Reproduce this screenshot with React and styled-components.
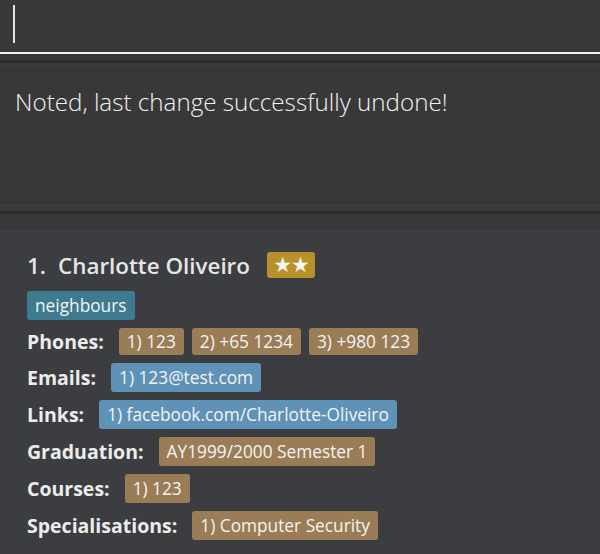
import React from "react";
import styled, { createGlobalStyle } from "styled-components";

const Global = createGlobalStyle`
  html, body { margin: 0; padding: 0; background: #383838; }
  body { width: 600px; height: 554px; overflow: hidden; font-family: "Open Sans", "Noto Sans", sans-serif; }
`;

const Page = styled.div`
  display: flex;
  flex-direction: column;
  width: 600px;
  height: 554px;
  background: #383838;
`;

const CommandBox = styled.div`
  height: 54px;
  border-bottom: 2px solid #f2f2f2;
  display: flex;
  align-items: flex-start;
  padding: 5px 0 0 13px;
  box-sizing: border-box;
  flex-shrink: 0;
`;

const Caret = styled.div`
  width: 2px;
  height: 38px;
  background: #e6e6e6;
`;

const Divider = styled.div`
  flex-shrink: 0;
  height: ${(p) => p.$h || 2}px;
  background: ${(p) => p.$c || "#2a2a2a"};
  margin-top: ${(p) => p.$mt || 0}px;
`;

const ResultBox = styled.div`
  flex-shrink: 0;
  height: 133px;
  padding: 14px 15px 0;
  box-sizing: border-box;
  color: #f2f2f2;
  font-family: "Open Sans", sans-serif;
  font-weight: 300;
  font-size: 24.2px;
  border-top: 1px solid #2f2f2f;
  border-bottom: 1px solid #2f2f2f;
  margin-top: 7px;
`;

const Card = styled.div`
  flex: 1;
  background: #3c3d40;
  margin-top: 16px;
  padding: 21px 0 0 27px;
  display: flex;
  flex-direction: column;
  gap: 8px;
`;

const NameRow = styled.div`
  display: flex;
  align-items: center;
  height: 28px;
  color: #e6e6e6;
  font-family: "Open Sans", sans-serif;
  font-weight: 600;
  font-size: 22.4px;
  margin-bottom: 4px;
`;

const Index = styled.span`
  width: 31px;
`;

const Stars = styled.span`
  margin-left: 17px;
  width: 48px;
  height: 26px;
  border-radius: 3px;
  background: #b8912a;
  color: #f4f4f4;
  font-size: 21px;
  display: flex;
  align-items: center;
  justify-content: center;
  letter-spacing: -1px;
  font-family: "DejaVu Sans", sans-serif;
`;

const Row = styled.div`
  display: flex;
  align-items: center;
  gap: 8px;
  height: ${(p) => p.$h || 29}px;
`;

const Label = styled.span`
  color: #ececec;
  font-family: "Open Sans", sans-serif;
  font-weight: 700;
  font-size: 19.5px;
  margin-right: 7px;
`;

const Tag = styled.span`
  display: inline-flex;
  align-items: center;
  height: ${(p) => p.$h || 29}px;
  padding: 0 8px;
  border-radius: 3px;
  background: ${(p) => p.$bg};
  color: #f4f4f4;
  font-family: "Open Sans", sans-serif;
  font-size: 17.3px;
  box-sizing: border-box;
`;

const BROWN = "#9a7d56";
const BLUE = "#5e92b6";

export default function App() {
  return (
    <Page>
      <Global />
      <CommandBox>
        <Caret />
      </CommandBox>
      <Divider $mt={6} $h={3} $c="#2b2b2b" />
      <ResultBox>Noted, last change successfully undone!</ResultBox>
      <Divider $mt={8} $h={3} $c="#2b2b2b" />
      <Card>
        <NameRow>
          <Index>1.</Index>
          <span>Charlotte Oliveiro</span>
          <Stars>★★</Stars>
        </NameRow>
        <Row>
          <Tag $bg="#3e7b91">neighbours</Tag>
        </Row>
        <Row $h={27}>
          <Label>Phones:</Label>
          <Tag $bg={BROWN} $h={27}>1) 123</Tag>
          <Tag $bg={BROWN} $h={27}>2) +65 1234</Tag>
          <Tag $bg={BROWN} $h={27}>3) +980 123</Tag>
        </Row>
        <Row>
          <Label>Emails:</Label>
          <Tag $bg={BLUE}>1) 123@test.com</Tag>
        </Row>
        <Row>
          <Label>Links:</Label>
          <Tag $bg={BLUE}>1) facebook.com/Charlotte-Oliveiro</Tag>
        </Row>
        <Row>
          <Label>Graduation:</Label>
          <Tag $bg={BROWN}>AY1999/2000 Semester 1</Tag>
        </Row>
        <Row>
          <Label>Courses:</Label>
          <Tag $bg={BROWN}>1) 123</Tag>
        </Row>
        <Row>
          <Label>Specialisations:</Label>
          <Tag $bg={BROWN}>1) Computer Security</Tag>
        </Row>
      </Card>
    </Page>
  );
}
